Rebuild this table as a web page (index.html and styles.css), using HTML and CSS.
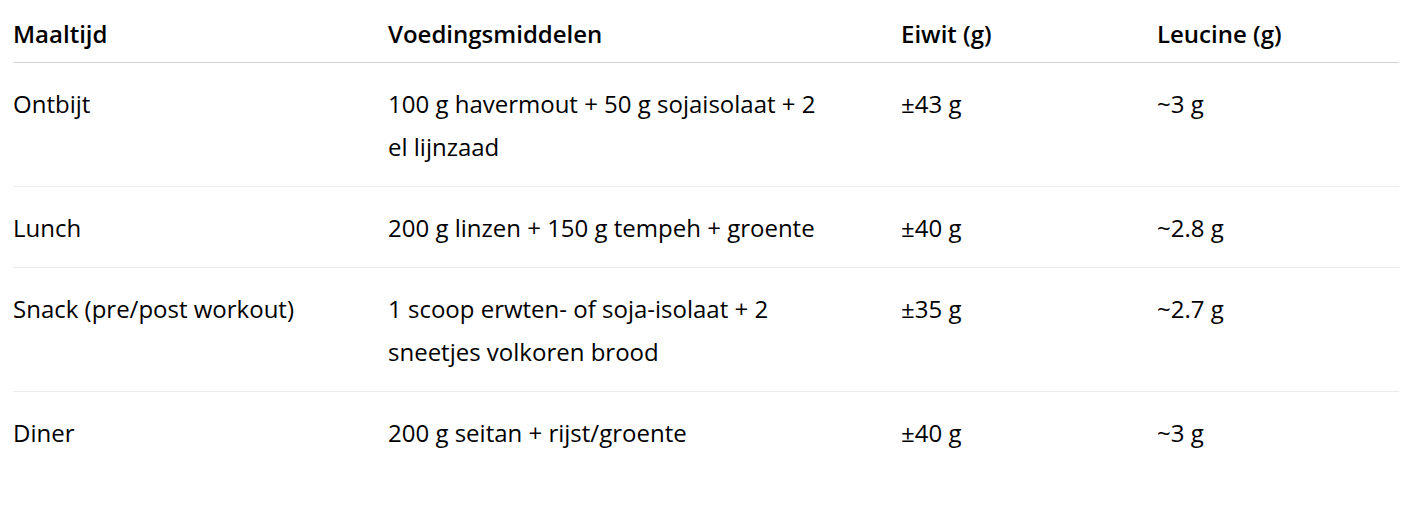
FILE: index.html
```html
<!DOCTYPE html>
<html lang="nl">
<head>
<meta charset="utf-8">
<link rel="stylesheet" href="styles.css">
</head>
<body>
<table class="meal-table">
  <thead>
    <tr>
      <th class="col-meal">Maaltijd</th>
      <th class="col-food">Voedingsmiddelen</th>
      <th class="col-protein">Eiwit (g)</th>
      <th class="col-leucine">Leucine (g)</th>
    </tr>
  </thead>
  <tbody>
    <tr>
      <td>Ontbijt</td>
      <td>100 g havermout + 50 g sojaisolaat + 2 el lijnzaad</td>
      <td>±43 g</td>
      <td>~3 g</td>
    </tr>
    <tr>
      <td>Lunch</td>
      <td>200 g linzen + 150 g tempeh + groente</td>
      <td>±40 g</td>
      <td>~2.8 g</td>
    </tr>
    <tr>
      <td>Snack (pre/post workout)</td>
      <td>1 scoop erwten- of soja-isolaat + 2 sneetjes volkoren brood</td>
      <td>±35 g</td>
      <td>~2.7 g</td>
    </tr>
    <tr class="last">
      <td>Diner</td>
      <td>200 g seitan + rijst/groente</td>
      <td>±40 g</td>
      <td>~3 g</td>
    </tr>
  </tbody>
</table>
</body>
</html>
```
FILE: styles.css
```css
html, body {
  margin: 0;
  padding: 0;
  background: #ffffff;
}
body {
  padding: 12px 22px 0 13px;
  font-family: "Open Sans", "Noto Sans", sans-serif;
  font-size: 24px;
  color: #000000;
}
.meal-table {
  width: 100%;
  border-collapse: collapse;
  table-layout: fixed;
}
.meal-table th,
.meal-table td {
  box-sizing: border-box;
  text-align: left;
  line-height: 43px;
  padding-right: 74px;
}
.col-meal { width: 375px; }
.col-food { width: 513px; }
.col-protein { width: 256px; }
.meal-table th {
  font-weight: 600;
  padding-top: 0;
  padding-bottom: 7px;
  padding-left: 0;
  border-bottom: 1px solid #d4d4d4;
}
.meal-table td {
  vertical-align: top;
  padding-top: 19px;
  padding-bottom: 18px;
  padding-left: 0;
  border-bottom: 1px solid #ececec;
}
.meal-table tr.last td {
  border-bottom: none;
}
```
